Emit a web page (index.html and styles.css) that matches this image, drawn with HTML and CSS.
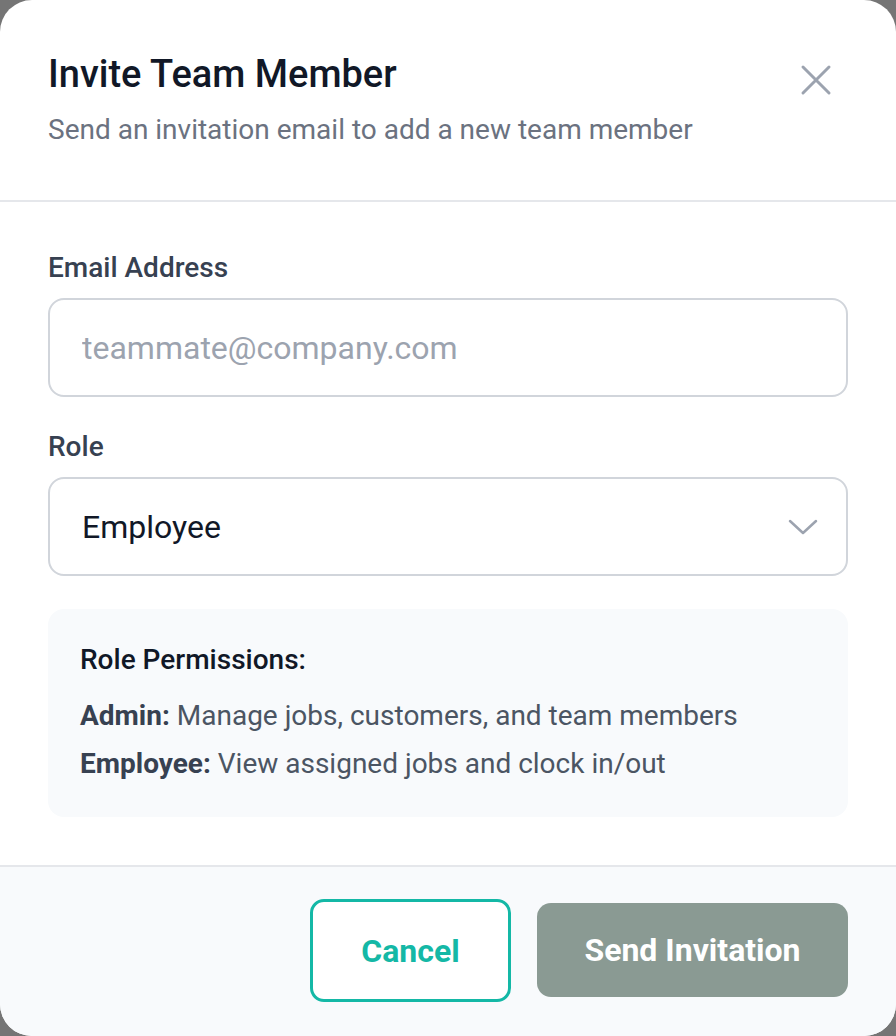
FILE: index.html
```html
<!DOCTYPE html>
<html lang="en">
<head>
  <meta charset="UTF-8">
  <title>Invite Team Member</title>
  <link rel="stylesheet" href="styles.css">
</head>
<body>

<div class="modal">
  <header class="modal-header">
    <div>
      <h1 class="modal-title">Invite Team Member</h1>
      <p class="modal-subtitle">Send an invitation email to add a new team member</p>
    </div>
    <button class="close-button" aria-label="Close">
      <svg width="32" height="32" viewBox="0 0 32 32" fill="none" stroke="#9ca3af" stroke-width="3" stroke-linecap="round">
        <path d="M3 3 L29 29 M29 3 L3 29"/>
      </svg>
    </button>
  </header>

  <div class="modal-body">
    <div class="field">
      <label class="field-label" for="email">Email Address</label>
      <input class="field-input" id="email" type="email" placeholder="teammate@company.com">
    </div>

    <div class="field">
      <label class="field-label" for="role">Role</label>
      <div class="select">
        <span class="select-value">Employee</span>
        <svg width="30" height="16" viewBox="0 0 30 16" fill="none" stroke="#9ca3af" stroke-width="2.5" stroke-linecap="round" stroke-linejoin="round">
          <path d="M2 2 L15 14 L28 2"/>
        </svg>
      </div>
    </div>

    <div class="permissions">
      <h2 class="permissions-title">Role Permissions:</h2>
      <p class="permission"><strong>Admin:</strong> Manage jobs, customers, and team members</p>
      <p class="permission"><strong>Employee:</strong> View assigned jobs and clock in/out</p>
    </div>
  </div>

  <footer class="modal-footer">
    <button class="btn btn-cancel">Cancel</button>
    <button class="btn btn-send">Send Invitation</button>
  </footer>
</div>

</body>
</html>
```

FILE: styles.css
```css
body {
  font-family: Roboto, 'Liberation Sans', sans-serif;
  margin: 0;
  padding: 0;
  background-color: #757575;
}

.modal {
  height: 1036px;
  display: flex;
  flex-direction: column;
  background-color: white;
  border-radius: 32px;
  overflow: hidden;
}

.modal-header {
  display: flex;
  justify-content: space-between;
  align-items: flex-start;
  padding: 54px 64px 54px 48px;
  border-bottom: 2px solid #e5e7eb;
}

.modal-title {
  margin: 0;
  font-size: 38px;
  line-height: 40px;
  font-weight: 500;
  color: #111827;
}

.modal-subtitle {
  margin: 20px 0 0;
  font-size: 28px;
  line-height: 32px;
  color: #6b7280;
}

.close-button {
  background: none;
  border: none;
  padding: 0;
  margin: 10px 0 0;
  width: 32px;
  height: 32px;
  cursor: pointer;
}

.modal-body {
  padding: 50px 48px 48px;
}

.field {
  margin-bottom: 34px;
}

.field-label {
  display: block;
  font-size: 28px;
  line-height: 32px;
  font-weight: 500;
  color: #374151;
  margin-bottom: 14px;
}

.field-input,
.select {
  box-sizing: border-box;
  width: 100%;
  height: 99px;
  border: 2px solid #d1d5db;
  border-radius: 16px;
  padding: 0 28px 0 32px;
  font-family: inherit;
  font-size: 32px;
  color: #111827;
  background-color: white;
}

.field-input::placeholder {
  color: #9ca3af;
}

.select {
  display: flex;
  align-items: center;
  justify-content: space-between;
}

.permissions {
  margin-top: -1px;
  background-color: #f8fafc;
  border-radius: 16px;
  padding: 35px 32px;
}

.permissions-title {
  margin: 0 0 22px;
  font-size: 28px;
  line-height: 32px;
  font-weight: 500;
  color: #111827;
}

.permission {
  margin: 0;
  font-size: 28px;
  line-height: 36px;
  color: #4b5563;
}

.permission + .permission {
  margin-top: 12px;
}

.permission strong {
  color: #374151;
  font-weight: 700;
}

.modal-footer {
  flex: 1;
  display: flex;
  justify-content: flex-end;
  align-items: flex-start;
  gap: 26px;
  padding: 32px 48px 0;
  background-color: #f8fafc;
  border-top: 2px solid #e5e7eb;
}

.btn {
  font-family: inherit;
  font-size: 32px;
  font-weight: 700;
  border-radius: 14px;
  cursor: pointer;
}

.btn-cancel {
  width: 201px;
  height: 103px;
  background-color: white;
  color: #14b8a6;
  border: 3px solid #14b8a6;
}

.btn-send {
  width: 311px;
  height: 94px;
  margin-top: 4px;
  background-color: #8a9a93;
  color: white;
  border: none;
}
```
